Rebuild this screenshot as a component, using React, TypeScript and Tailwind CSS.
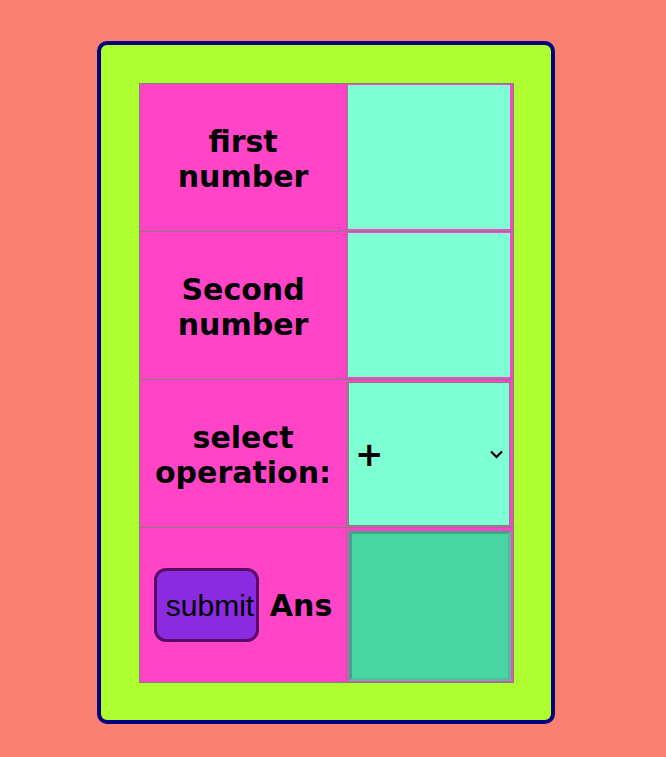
import { useState } from "react";

const label = "text-center align-middle border border-[#808080] px-2 text-[30px] font-bold leading-[35px] text-black [font-family:'DejaVu_Sans',sans-serif]";

export default function App() {
  const [op, setOp] = useState("+");
  return (
    <div className="min-h-[757px] bg-[#fa8072] pl-[97px] pt-[41px]">
      <div className="w-[458px] rounded-[10px] border-4 border-[#000080] bg-[#adff2f] pb-[37px] pl-[38px] pr-[37px] pt-[38px]">
        <table className="border-collapse border border-[#808080] bg-[#ff44c8]">
          <tbody>
            <tr className="h-[148px]">
              <td className={`${label} w-[208px] pt-[3px]`}>first<br />number</td>
              <td className="w-[167px] border border-[#808080] pb-[2px] pl-px pr-[2px] pt-px align-middle">
                <input className="block h-[144px] w-[162px] bg-[#7fffd4] outline-none" />
              </td>
            </tr>
            <tr className="h-[148px]">
              <td className={`${label} pt-[3px]`}>Second<br />number</td>
              <td className="border border-[#808080] pb-[2px] pl-px pr-[2px] pt-px align-middle">
                <input className="block h-[144px] w-[162px] bg-[#7fffd4] outline-none" />
              </td>
            </tr>
            <tr className="h-[148px]">
              <td className={`${label} pt-[3px]`}>select<br />operation:</td>
              <td className="border border-[#808080] pl-px pr-[2px] pt-[2px] pb-px align-middle">
                <div className="relative">
                  <select
                    value={op}
                    onChange={(e) => setOp(e.target.value)}
                    className="block h-[144px] w-[162px] appearance-none border border-[#808080] bg-[#7fffd4] pl-[6px] text-[34px] font-bold text-black outline-none [font-family:'DejaVu_Sans',sans-serif]"
                  >
                    <option>+</option>
                    <option>-</option>
                    <option>*</option>
                    <option>/</option>
                  </select>
                  <svg className="pointer-events-none absolute right-[7px] top-[67px] h-[10px] w-[15px]" viewBox="0 0 15 10">
                    <path d="M2 2.5 L7.5 8 L13 2.5" fill="none" stroke="black" strokeWidth="2.2" />
                  </svg>
                </div>
              </td>
            </tr>
            <tr className="h-[155px]">
              <td className="border border-[#808080] align-middle">
                <div className="flex items-center justify-center gap-[11px]">
                  <button className="h-[74px] w-[105px] overflow-visible whitespace-nowrap rounded-[12px] border-[3px] border-[#5a0a66] bg-[#8a2be2] pl-[9px] text-left text-[30px] text-black [font-family:'Liberation_Sans',Arial,sans-serif]">
                    submit
                  </button>
                  <span className="text-[30px] font-bold text-black [font-family:'DejaVu_Sans',sans-serif]">Ans</span>
                </div>
              </td>
              <td className="border border-[#808080] pl-[2px] pr-px pt-[2px] pb-px align-middle">
                <div className="h-[150px] w-[162px] border-[3px] border-t-[#3ca887] border-l-[#3ca887] border-r-[#4fbf98] border-b-[#4fbf98] bg-[#48d5a3]" />
              </td>
            </tr>
          </tbody>
        </table>
      </div>
    </div>
  );
}
